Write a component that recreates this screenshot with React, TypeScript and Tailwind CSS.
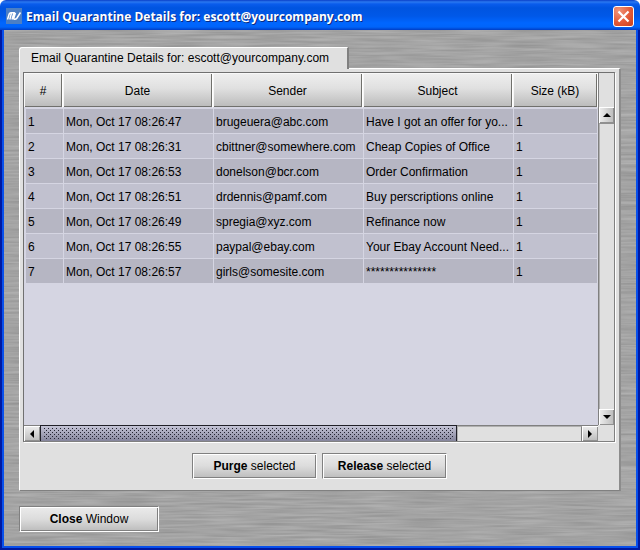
import React from "react";
import type { ReactNode } from "react";

const columns = ["#", "Date", "Sender", "Subject", "Size (kB)"];

const messages = [
  ["1", "Mon, Oct 17 08:26:47", "brugeuera@abc.com", "Have I got an offer for yo...", "1"],
  ["2", "Mon, Oct 17 08:26:31", "cbittner@somewhere.com", "Cheap Copies of Office", "1"],
  ["3", "Mon, Oct 17 08:26:53", "donelson@bcr.com", "Order Confirmation", "1"],
  ["4", "Mon, Oct 17 08:26:51", "drdennis@pamf.com", "Buy perscriptions online", "1"],
  ["5", "Mon, Oct 17 08:26:49", "spregia@xyz.com", "Refinance now", "1"],
  ["6", "Mon, Oct 17 08:26:55", "paypal@ebay.com", "Your Ebay Account Need...", "1"],
  ["7", "Mon, Oct 17 08:26:57", "girls@somesite.com", "***************", "1"],
];

function BrushedMetal() {
  return (
    <svg className="absolute inset-0 size-full" aria-hidden="true">
      <filter id="metal" x="0" y="0" width="100%" height="100%" colorInterpolationFilters="sRGB">
        <feTurbulence type="fractalNoise" baseFrequency="0.02 0.45" numOctaves="2" seed="4" />
        <feColorMatrix values="0.16 0 0 0 0.56  0.16 0 0 0 0.56  0.16 0 0 0 0.56  0 0 0 0 1" />
      </filter>
      <rect width="100%" height="100%" filter="url(#metal)" />
    </svg>
  );
}

function TitleBar() {
  return (
    <header className="flex h-[30px] shrink-0 items-center rounded-t-[6px] bg-[linear-gradient(180deg,#0a3fc8_0px,#2a78f0_2px,#0a5cec_4px,#0054e0_8px,#0058e8_16px,#0066ff_23px,#0064fa_27px,#003dc4_30px)] pr-[6px] pl-[6px]">
      <svg className="mt-[2px] size-4 shrink-0" viewBox="0 0 16 16" aria-hidden="true">
        <rect width="16" height="16" fill="#4c7fc4" />
        <path
          d="M1.5 11.5 3.2 6Q3.6 4.8 5 4.8H8L6 11.5M5.5 5 3.8 11.5M9.5 4.8 7.8 10Q7.5 11.3 8.8 11.3 10 11.3 10.8 10.2L14.5 4.5"
          fill="none"
          stroke="#fff"
          strokeWidth="1.5"
        />
      </svg>
      <h1 className="mt-[4px] ml-[4px] flex-1 truncate font-['Open_Sans','Noto_Sans',sans-serif] text-[12px] leading-[18px] font-bold text-white [text-shadow:1px_1px_#0a2a80]">
        Email Quarantine Details for: escott@yourcompany.com
      </h1>
      <button
        type="button"
        aria-label="Close"
        className="mt-[3px] grid size-[21px] place-items-center rounded-[3px] border border-white bg-[radial-gradient(circle_at_25%_20%,#f0957a,#e35a38_55%,#c8401c)]"
      >
        <svg className="size-[13px]" viewBox="0 0 13 13" aria-hidden="true">
          <path d="M1.5 1.5 11.5 11.5M11.5 1.5 1.5 11.5" stroke="#fff" strokeWidth="2.2" />
        </svg>
      </button>
    </header>
  );
}

function PushButton({ className, children }: { className: string; children: ReactNode }) {
  return (
    <button
      type="button"
      className={`h-[26px] border border-t-[#808080] border-r-white border-b-white border-l-[#808080] bg-[linear-gradient(180deg,#ebebeb,#dcdcdc_50%,#bcbcbc)] pb-px text-[12px] leading-[16px] shadow-[inset_1px_1px_#fff,inset_-1px_-1px_#808080] ${className}`}
    >
      {children}
    </button>
  );
}

function ArrowButton({ label, points, className }: { label: string; points: string; className: string }) {
  return (
    <button
      type="button"
      aria-label={label}
      className={`grid shrink-0 place-items-center shadow-[inset_1px_1px_#fff,inset_-1px_-1px_#909090] ${className}`}
    >
      <svg className="size-2" viewBox="0 0 8 8" aria-hidden="true">
        <polygon points={points} fill="#000" />
      </svg>
    </button>
  );
}

function MessageTable() {
  return (
    <table className="w-full table-fixed border-separate border-spacing-0 text-[12px] leading-[16px]">
      <colgroup>
        <col className="w-[39px]" />
        <col className="w-[150px]" />
        <col className="w-[150px]" />
        <col className="w-[150px]" />
        <col />
      </colgroup>
      <thead>
        <tr>
          {columns.map((name) => (
            <th
              key={name}
              className="h-[35px] border-r border-b border-r-white border-b-[#d5d5e2] bg-[linear-gradient(180deg,#efefef,#e0e0e0_45%,#bababa)] p-0 pt-px text-center font-normal shadow-[inset_1px_1px_#f8f8f8,inset_-1px_-1px_#70706c]"
            >
              {name}
            </th>
          ))}
        </tr>
      </thead>
      <tbody>
        {messages.map((row) => (
          <tr key={row[0]} className="bg-[#b6b6c3] even:bg-[#c1c1cf]">
            {row.map((cell, i) => (
              <td
                key={i}
                className="h-[25px] overflow-hidden border-t border-l border-[#d5d5e2] p-0 pt-[2px] pl-[2px] whitespace-nowrap first:border-l-2 last:border-r"
              >
                {cell}
              </td>
            ))}
          </tr>
        ))}
      </tbody>
    </table>
  );
}

function VerticalScroll() {
  return (
    <div className="flex flex-col border-l border-[#808080] bg-[#e0e0e0]">
      <div className="h-[34px] shrink-0" />
      <ArrowButton label="Scroll up" points="4,2 8,6 0,6" className="h-4 bg-[linear-gradient(90deg,#eee,#bbb)]" />
      <div className="flex-1 border-t border-l border-t-[#909090] border-l-[#b0b0b0]" />
      <ArrowButton label="Scroll down" points="0,2 8,2 4,6" className="h-4 bg-[linear-gradient(90deg,#eee,#bbb)]" />
    </div>
  );
}

function HorizontalScroll() {
  return (
    <div className="flex h-4 border-t border-[#808080] bg-[#e0e0e0]">
      <ArrowButton label="Scroll left" points="2,4 6,0 6,8" className="w-4 bg-[linear-gradient(180deg,#eee,#bbb)]" />
      <div className="flex min-w-0 flex-1">
        <div className="w-[77%] border-r border-l border-[#202028] bg-[linear-gradient(180deg,#c4c4d6,#85859c)] py-[2px] pr-[2px] pl-[3px] shadow-[0_-1px_#202028]">
          <svg className="block size-full" aria-hidden="true" shapeRendering="crispEdges">
            <pattern id="grip" width="4" height="4" patternUnits="userSpaceOnUse">
              <rect width="1" height="1" fill="#222230" />
              <rect x="2" y="2" width="1" height="1" fill="#222230" />
            </pattern>
            <rect width="100%" height="100%" fill="url(#grip)" />
          </svg>
        </div>
        <div className="flex-1 border-t border-r border-l border-t-[#b0b0b0] border-r-[#808080] border-l-[#b0b0b0]" />
      </div>
      <ArrowButton label="Scroll right" points="6,4 2,0 2,8" className="w-4 bg-[linear-gradient(180deg,#eee,#bbb)]" />
    </div>
  );
}

export default function App() {
  return (
    <div className="flex min-h-screen flex-col bg-white font-['Liberation_Sans',Arial,sans-serif] text-black">
      <TitleBar />
      <main className="flex flex-1 flex-col border-x-2 border-b-2 border-[#0019a0]">
        <div className="relative flex flex-1 flex-col border-x-2 border-b-2 border-[#0850ec] px-[15px] pt-[17px] pb-[14px]">
          <BrushedMetal />
          <div role="tablist" className="relative z-10 -mb-px flex">
            <button
              type="button"
              role="tab"
              aria-selected="true"
              className="h-[22px] rounded-tl-[3px] border-t border-r-2 border-l border-t-white border-r-[#808080] border-l-white bg-[#e0e0e0] pr-[18px] pb-px pl-[11px] text-[12px] leading-[16px]"
            >
              Email Quarantine Details for: escott@yourcompany.com
            </button>
          </div>
          <section className="relative flex flex-1 flex-col border-t border-r-2 border-b border-l border-t-white border-r-[#8c8c8c] border-b-[#808080] border-l-white bg-[#e0e0e0] px-[3px] pt-[3px] pb-[11px]">
            <div className="mr-px grid flex-1 grid-cols-[minmax(0,1fr)_16px] grid-rows-[1fr_16px] border border-t-[#707070] border-r-[#808080] border-b-[#808080] border-l-[#707070] bg-[#e0e0e0] shadow-[1px_1px_#fff]">
              <div className="bg-[#d5d5e2]">
                <MessageTable />
              </div>
              <VerticalScroll />
              <HorizontalScroll />
              <div />
            </div>
            <div className="mt-[11px] flex justify-center gap-[5px]">
              <PushButton className="w-[125px]">
                <b>Purge</b> selected
              </PushButton>
              <PushButton className="w-[125px]">
                <b>Release</b> selected
              </PushButton>
            </div>
          </section>
          <div className="relative mt-[15px] flex">
            <PushButton className="w-[140px]">
              <b>Close</b> Window
            </PushButton>
          </div>
        </div>
      </main>
    </div>
  );
}
